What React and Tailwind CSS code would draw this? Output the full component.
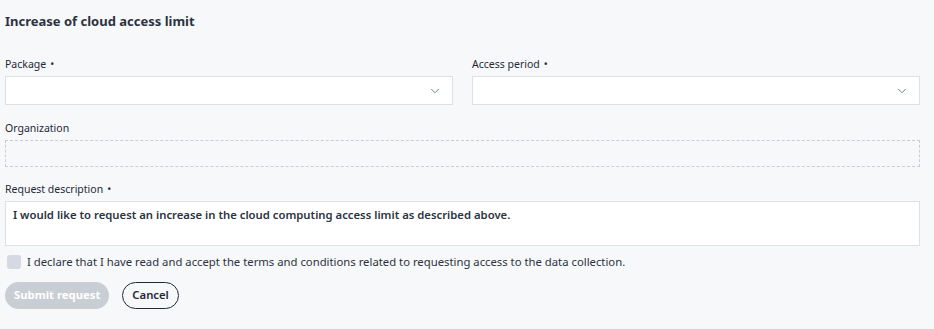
import { ChevronDown } from 'lucide-react';

const Label = ({ children, required }) => (
  <div className="text-[10.5px] text-[#1f2937] leading-4 mb-[4px]">
    {children}
    {required && <span className="ml-1">•</span>}
  </div>
);

const SelectBox = () => (
  <div className="h-[29px] bg-white border border-[#dde1e6] flex items-center justify-end pr-[10px]">
    <ChevronDown className="w-[14px] h-[14px] text-[#5b6b86]" strokeWidth={1.5} />
  </div>
);

export default function App() {
  return (
    <div className="w-[934px] h-[329px] bg-[#f7f8fa] pl-[5px] pr-[14px] pt-[13px] font-['Noto_Sans',sans-serif] text-[#1f2937]">
      <h2 className="text-[13px] font-bold leading-4 text-[#2b3340]">Increase of cloud access limit</h2>

      <div className="grid grid-cols-2 gap-[19px] mt-[27px]">
        <div>
          <Label required>Package</Label>
          <SelectBox />
        </div>
        <div>
          <Label required>Access period</Label>
          <SelectBox />
        </div>
      </div>

      <div className="mt-[15px]">
        <Label>Organization</Label>
        <div className="h-[27px] border border-dashed border-[#c9ced6]" />
      </div>

      <div className="mt-[14px]">
        <Label required>Request description</Label>
        <div className="h-[45px] bg-white border border-[#dde1e6] px-[7px] pt-[5px] text-[11.3px] font-semibold text-[#2b3340] leading-4">
          I would like to request an increase in the cloud computing access limit as described above.
        </div>
      </div>

      <label className="flex items-center gap-[6px] mt-[8px] ml-[2px]">
        <span className="w-[14px] h-[14px] rounded-[3px] bg-[#d5dae2]" />
        <span className="text-[11.3px] text-[#2b3340] leading-4">
          I declare that I have read and accept the terms and conditions related to requesting access to the data collection.
        </span>
      </label>

      <div className="flex items-center gap-[13px] mt-[12px]">
        <button className="h-[27px] px-[9px] rounded-full bg-[#c9ced4] text-white text-[11.3px] font-bold">
          Submit request
        </button>
        <button className="h-[27px] px-[9px] rounded-full border border-[#1f2937] text-[#1f2937] text-[11.3px] font-semibold">
          Cancel
        </button>
      </div>
    </div>
  );
}
